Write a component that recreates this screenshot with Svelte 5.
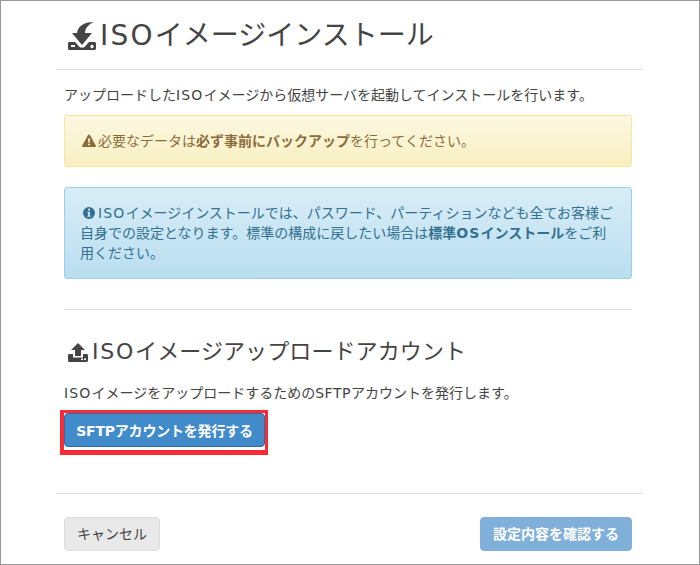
<script>
  const iso = 'ISO';
</script>

<div class="frame">
  <div class="page">
    <div class="head">
      <svg class="ico-big" viewBox="0 0 28 28" width="28" height="28">
        <path fill="#444" d="M26 0C18 0 10 3 9 11H4l10 12 10-12h-7c0-5 4-9 9-11z"/>
        <path fill="#444" fill-rule="evenodd" d="M1.500 20H7l5 5.500h4l5-5.500h5.500c.8 0 1.500.7 1.500 1.500v5c0 .8-.7 1.500-1.500 1.500h-25C.7 28 0 27.300 0 26.500v-5C0 20.700.7 20 1.500 20zM3 23v2h4v-2zm21-.2a1.700 1.700 0 1 0 .01 0z"/>
      </svg>
      <h1><span class="lat">{iso}</span>イメージインストール</h1>
    </div>

    <div class="body">
      <p class="lead">アップロードした<span class="lat">{iso}</span>イメージから仮想サーバを起動してインストールを行います。</p>

      <div class="alert warn">
        <svg class="ico-warn" viewBox="0 0 14 13" width="14" height="13">
          <path fill="#8a6d3b" fill-rule="evenodd" d="M7 .5c.4 0 .7.2.9.5l5.900 10.400c.4.7-.1 1.600-.9 1.600H1.100c-.8 0-1.300-.9-.9-1.600L6.100 1c.2-.3.500-.5.900-.5zM6 4.500l.3 4.200h1.400L8 4.500zm0 5.300V11.300h2V9.800z"/>
        </svg>必要なデータは<b>必ず事前にバックアップ</b>を行ってください。
      </div>

      <div class="alert info">
        <svg class="ico-info" viewBox="0 0 12 12" width="12" height="12">
          <path fill="#31708f" fill-rule="evenodd" d="M6 0a6 6 0 1 1 0 12A6 6 0 0 1 6 0zM5 1.800v1.700h2V1.800zM4.300 4.800v1h.8v3h-.8v1h3.400v-1h-.8v-4z"/>
        </svg><span class="lat">{iso}</span>イメージインストールでは、パスワード、パーティションなども全てお客様ご自身での設定となります。標準の構成に戻したい場合は<b>標準<span class="lat">OS</span>インストール</b>をご利用ください。
      </div>

      <hr class="inner" />

      <div class="sub-head">
        <svg class="ico-mid" viewBox="0 0 20 19" width="20" height="19">
          <path fill="#444" d="M10 0l7 7h-4v6H7V7H3z"/>
          <path fill="#444" fill-rule="evenodd" d="M1.500 11H5v3.500h10V11h3.500c.8 0 1.500.7 1.500 1.500v5c0 .8-.7 1.500-1.500 1.500h-17C.7 19 0 18.300 0 17.500v-5C0 11.700.7 11 1.500 11zM13 15.500V17h2v-1.500zm3 0V17h2v-1.500z"/>
        </svg>
        <h2><span class="lat">{iso}</span>イメージアップロードアカウント</h2>
      </div>
      <p class="lead2"><span class="lat">{iso}</span>イメージをアップロードするための<span class="lat sftp">SFTP</span>アカウントを発行します。</p>

      <div class="mark">
        <button class="btn primary">SFTPアカウントを発行する</button>
      </div>
    </div>

    <div class="foot">
      <button class="btn cancel">キャンセル</button>
      <button class="btn confirm" disabled>設定内容を確認する</button>
    </div>
  </div>
</div>

<style>
  :global(body) {
    margin: 0;
    background: #fff;
  }

  .frame {
    box-sizing: border-box;
    width: 700px;
    height: 565px;
    border: 1px solid #999;
    color: #444;
    font-family: "DejaVu Sans", "Noto Sans CJK JP", sans-serif;
    font-size: 14px;
    line-height: 20px;
    overflow: hidden;
  }

  .page {
    width: 587px;
    margin-left: 55px;
  }

  .lat {
    letter-spacing: 0.08em;
  }

  .sftp {
    letter-spacing: 0.04em;
  }

  .head {
    display: flex;
    align-items: center;
    gap: 4px;
    height: 69px;
    padding: 2px 0 0 12px;
    border-bottom: 1px solid #e2e2e2;
    box-sizing: border-box;
  }

  h1 {
    margin: 0;
    font-size: 28px;
    font-weight: 400;
    line-height: 36px;
  }

  .body {
    padding: 0 11px 0 8px;
  }

  .lead {
    margin: 15px 0 0;
  }

  .alert {
    box-sizing: border-box;
    border: 1px solid;
    border-radius: 3px;
  }

  .warn {
    height: 52px;
    padding: 15px 17px;
    margin-top: 10px;
    color: #8a6d3b;
    border-color: #f5e79e;
    background: linear-gradient(#fcf8e3, #f8efc0);
  }

  .info {
    height: 92px;
    margin-top: 20px;
    padding: 15px;
    color: #31708f;
    border-color: #9acfea;
    background: linear-gradient(#d9edf7, #b9def0);
  }

  .ico-warn {
    margin-right: 2px;
    vertical-align: -1px;
  }

  .ico-info {
    margin: 0 3px;
    vertical-align: -1px;
  }

  .inner {
    margin: 30px 0 0;
    border: 0;
    border-top: 1px solid #e2e2e2;
  }

  .sub-head {
    display: flex;
    align-items: center;
    gap: 4px;
    margin-top: 27px;
    padding-left: 4px;
  }

  h2 {
    margin: 0;
    font-size: 22px;
    font-weight: 400;
    line-height: 30px;
    letter-spacing: 0.1px;
  }

  .lead2 {
    margin: 16px 0 0;
  }

  .mark {
    display: block;
    box-sizing: border-box;
    width: 208px;
    height: 45px;
    margin: 7px 0 0 -4px;
    border: 3px solid #fb2a33;
    border-left-width: 4px;
    border-bottom-width: 5px;
    line-height: 0;
  }

  .btn {
    box-sizing: border-box;
    height: 34px;
    padding: 0;
    border: 1px solid;
    border-radius: 4px;
    font: inherit;
    font-size: 14px;
    line-height: 20px;
    white-space: nowrap;
  }

  .primary {
    width: 201px;
    padding-top: 1px;
    color: #fff;
    font-weight: 700;
    letter-spacing: -0.2px;
    background: #428bca;
    border-color: #2e6da4;
  }

  .foot {
    display: flex;
    justify-content: space-between;
    margin-top: 38px;
    padding: 23px 11px 0 8px;
    border-top: 1px solid #e2e2e2;
  }

  .cancel {
    width: 96px;
    color: #444;
    background: #e9e9e9;
    border-color: #ddd;
  }

  .confirm {
    width: 152px;
    color: #fff;
    font-weight: 700;
    background: #80b0da;
    border-color: #80b0da;
  }
</style>
